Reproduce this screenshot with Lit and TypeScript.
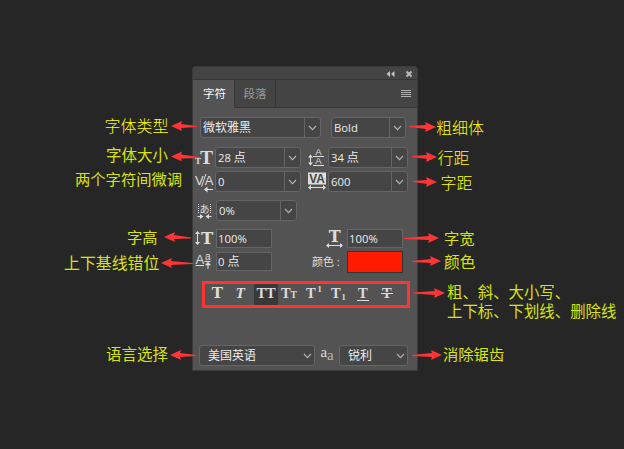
import { LitElement, html, svg, css, nothing } from "lit";
import { customElement, property } from "lit/decorators.js";

type Note = { text: string; x: number; y: number; size: number; bright?: boolean };

const notes: Note[] = [
  { text: "字体类型", x: 104.5, y: 124.5, size: 16, bright: true },
  { text: "字体大小", x: 106, y: 154.5, size: 15.5 },
  { text: "两个字符间微调", x: 75, y: 178.5, size: 15.3 },
  { text: "字高", x: 127, y: 236.5, size: 15.3 },
  { text: "上下基线错位", x: 64, y: 263, size: 15.9 },
  { text: "语言选择", x: 106, y: 353.5, size: 15.5 },
  { text: "粗细体", x: 436, y: 127, size: 16, bright: true },
  { text: "行距", x: 437.5, y: 156.500, size: 16, bright: true },
  { text: "字距", x: 440.5, y: 181.5, size: 16, bright: true },
  { text: "字宽", x: 444, y: 237.5, size: 15.3 },
  { text: "颜色", x: 444, y: 261.5, size: 15.7 },
  { text: "粗、斜、大小写、", x: 447, y: 292, size: 15.4 },
  { text: "上下标、下划线、删除线", x: 447, y: 310.5, size: 15.4 },
  { text: "消除锯齿", x: 443, y: 353.5, size: 15.3 },
];

// [tip x, tip y, tail x, tail y]
const arrows: number[][] = [
  [171, 126, 197, 126.5],
  [171, 156.5, 200, 157.5],
  [164, 237, 191, 238],
  [161, 263, 193, 263.5],
  [170, 355, 196, 355.5],
  [436, 127, 409, 126.5],
  [437, 157, 412, 156.5],
  [437, 182, 413, 181.5],
  [439, 238, 404, 238.5],
  [441, 261, 412, 261.5],
  [445, 293, 413, 293],
  [442, 355, 412, 355.5],
];

const arrowPath = ([tx, ty, ex, ey]: number[]) => {
  const d = Math.sign(ex - tx);
  const hx = tx + 10 * d;
  return `M${tx} ${ty}L${hx + d} ${ty - 5}L${hx} ${ty - 2}L${ex} ${ey - 0.5}V${ey + 0.5}L${hx} ${ty + 2}L${hx + d} ${ty + 5}Z`;
};

@customElement("panel-field")
export class PanelField extends LitElement {
  @property() value = "";
  @property() kind = "combo";

  static styles = css`
    :host { display: block; box-sizing: border-box; }
    .box {
      box-sizing: border-box; height: 100%; display: flex; align-items: center;
      background: #454545; border: 1px solid #666; color: #ececec;
      font: 11.5px/1 "Open Sans", "Noto Sans CJK SC", sans-serif;
    }
    .combo, .select { border-radius: 3px; }
    .value { flex: 1; padding-left: 1px; white-space: nowrap; font-size: 11.3px; }
    .combo .value { padding-left: 2px; }
    .han { font-size: 12px; }
    .select .value { padding-left: 8px; font-size: 12px; }
    .arrow { width: 15px; height: 100%; display: flex; align-items: center; justify-content: center; }
    .combo .arrow { border-left: 1px solid #666; }
    .select .arrow { width: 14px; }
  `;

  render() {
    const parts = this.value.split(/([\u4e00-\u9fff]+)/);
    return html`<div class="box ${this.kind}">
      <span class="value">${parts.map((p, i) => (i % 2 ? html`<span class="han">${p}</span>` : p))}</span>
      ${this.kind === "text"
        ? nothing
        : html`<span class="arrow"><svg width="9" height="6" viewBox="0 0 9 6" fill="none" stroke="#b4b4b4" stroke-width="1.1"><path d="M1 1l3.5 3.6L8 1" /></svg></span>`}
    </div>`;
  }
}

const t = (x: number, y: number, size: number, s = "T", cls = "b") =>
  svg`<text class=${cls} x=${x} y=${y} font-size=${size}>${s}</text>`;

const icon = (w: number, h: number, body: unknown) =>
  html`<svg class="icon" width=${w} height=${h} viewBox="0 0 ${w} ${h}">${body}</svg>`;

const hArrow = (x1: number, x2: number, y: number) =>
  svg`<path class="line" d="M${x1 + 1} ${y}H${x2 - 1}" /><path class="solid" d="M${x1} ${y}l3-2.500v5zM${x2} ${y}l-3-2.500v5z" />`;
const vArrow = (x: number, y1: number, y2: number) =>
  svg`<path class="line" d="M${x} ${y1 + 1}V${y2 - 1}" /><path class="solid" d="M${x} ${y1}l-2.500 3h5zM${x} ${y2}l-2.500-3h5z" />`;

const icons = {
  size: icon(20, 20, svg`${t(0, 15.5, 9)}${t(5, 15.5, 19.5)}`),
  leading: icon(18, 20, svg`${vArrow(2.5, 6.5, 17.5)}
    <path class="line" d="M5 8.5h11M5 17.5h11" />${t(7.3, 7, 9.5, "A", "s")}${t(7.3, 16, 9.5, "A", "s")}`),
  kerning: icon(20, 20, svg`${t(0, 13, 13, "V", "s")}${t(9.8, 13, 13, "A", "s")}
    <path class="line" d="M6.5 14.5L11 2M11 17.5h7" /><path class="solid" d="M9 17.500l3.500-3v6z" />`),
  tracking: icon(18, 19, svg`<rect class="solid" y="0.5" width="18" height="12" />
    <text class="dark" x="1.2" y="11" font-size="12.5" textLength="15.6" lengthAdjust="spacingAndGlyphs">VA</text>${hArrow(0, 18, 15.5)}`),
  tsume: icon(20, 18, svg`<path class="dots" d="M3.500 2v9M15.500 2v9" />
    <text class="jp" x="4.5" y="10.500" font-size="10">あ</text>
    <path class="line" d="M2.500 14.500h3M13.500 14.500h3" /><path class="solid" d="M8.500 14.500l-3.500-2.500v5zM10.500 14.500l3.500-2.500v5z" />`),
  tall: icon(20, 18, svg`${vArrow(2.5, 1, 15)}${t(6, 14, 16.5, "T", "slab")}`),
  wide: icon(18, 18, svg`${t(2.8, 12, 16, "T", "slab")}${hArrow(0, 17, 15.5)}`),
  baseline: icon(17, 17, svg`${t(0.5, 11.3, 13, "A", "s")}${t(10, 6.800, 10, "a", "s")}
    <path class="line" d="M0.500 12.500h8.500M9.500 8.500h6M13 11v5" /><path class="solid" d="M13 8.800l-3 3.500h6z" />`),
  alias: icon(14, 14, svg`${t(0.5, 8, 15, "a", "r")}${t(7, 11, 15, "a", "r dim")}`),
};

const styles: { name: string; art: unknown; on?: boolean }[] = [
  { name: "bold", art: svg`${t(5.800, 14.2, 15, "T", "slab wide")}` },
  { name: "italic", art: svg`<text class="b ital" x="5.500" y="14.2" font-size="15.500">T</text>` },
  { name: "caps", on: true, art: svg`${t(2.6, 14.2, 14.5)}${t(12, 14.2, 14.5)}` },
  { name: "small-caps", art: svg`${t(3, 14.2, 14.5)}${t(12.500, 14.2, 9.500)}` },
  { name: "super", art: svg`${t(4, 14.2, 14.5)}${t(15.500, 8, 8.5, "1")}` },
  { name: "sub", art: svg`${t(4, 14.2, 14.5)}${t(14.500, 15.500, 8.5, "1")}` },
  { name: "underline", art: svg`${t(7, 13.5, 14.5)}<path class="line" d="M6 16.500h12" />` },
  { name: "strike", art: svg`${t(7, 14.2, 14.5)}<path class="cut" d="M5 8.500h14" /><path class="line" d="M6 9.500h12" />` },
];

@customElement("character-panel")
export class CharacterPanel extends LitElement {
  static styles = css`
    :host {
      display: flex; flex-direction: column; box-sizing: border-box; width: 226px; height: 305px;
      background: #535353; border: 1px solid #3a3a3a; border-radius: 4px 4px 0 0; overflow: hidden;
      color: #ddd; font: 12px/1 "Open Sans", "Noto Sans CJK SC", sans-serif;
    }
    .title { height: 12px; flex: none; background: #444; border-bottom: 1px solid #363636; display: flex; justify-content: flex-end; align-items: center; }
    .title svg { margin: 1px 4px 0 0; }
    .tabs { height: 28px; flex: none; box-sizing: border-box; display: flex; background: #444; }
    .tab { box-sizing: border-box; width: 41px; border-right: 1px solid #363636; border-bottom: 1px solid #363636; display: flex; align-items: center; justify-content: center; color: #9b9b9b; font-size: 11.5px; }
    .tab.on { width: 42px; padding-left: 2px; background: #535353; color: #fafafa; border-bottom-color: #535353; }
    .rest { flex: 1; display: flex; justify-content: flex-end; align-items: center; padding-right: 6px; border-bottom: 1px solid #363636; }
    .row { display: grid; align-items: center; }
    .families { margin: 9px 0 0 7px; height: 21px; grid-template-columns: 121px 75px; column-gap: 10px; }
    .pair { margin: 9px 0 0 2px; height: 21px; grid-template-columns: 20px 86px 7px 20px 80px; }
    .families > panel-field, .pair > panel-field { height: 21px; }
    .pair .right { grid-column: 4; }
    .pair + .pair { margin-top: 3px; }
    .pair.single { margin-top: 8px; grid-template-columns: 21px 81px; }
    .scale { margin: 8px 0 0 2px; height: 19px; grid-template-columns: 21px 56px 54px 21px 56px; }
    .scale > panel-field { height: 19px; }
    .shift { margin: 3px 0 0 2px; height: 22px; grid-template-columns: 21px 56px 39px 36px 56px; align-items: start; }
    .shift > panel-field { height: 19px; margin-top: 1px; }
    .shift > .icon { margin-top: 2px; }
    .caption { white-space: nowrap; padding: 5px 0 0 1px; color: #ddd; font-size: 11px; }
    .swatch { box-sizing: border-box; height: 22px; background: #ff1a00; border: 1px solid #333; }
    .styles { box-sizing: border-box; margin: 8px 0 0 9px; width: 208px; height: 27px; flex: none; border: 3px solid #ff3535; padding-left: 1px; display: flex; align-items: center; }
    .style { width: 24.1px; height: 21px; flex: none; display: flex; justify-content: center; }
    .style.on { background: #383838; border-radius: 2px; }
    .footer { margin: 37px 0 0 6px; height: 21px; grid-template-columns: 116px 24px 69px; }
    .footer > panel-field { height: 21px; }
    .footer .icon { justify-self: center; }
    .icon, .style svg { display: block; overflow: visible; }
    text { fill: #ddd; }
    .b { font-family: "Liberation Serif", serif; font-weight: 700; }
    .slab { font-family: "DejaVu Serif", serif; font-weight: 700; }
    .r { font-family: "Liberation Serif", serif; }
    .ital { font-style: italic; }
    .dim { fill: #b5b5b5; }
    .s { font-family: "Liberation Sans", sans-serif; }
    .dark { fill: #444; font-family: "Liberation Sans", sans-serif; font-weight: 700; }
    .jp { font-family: "Noto Sans CJK JP", sans-serif; }
    .line { stroke: #ddd; fill: none; }
    .cut { stroke: #535353; }
    .solid { fill: #ddd; }
    .dots { stroke: #ddd; stroke-dasharray: 1 1; }
  `;

  render() {
    return html`
      <div class="title">
        <svg width="27" height="8" viewBox="0 0 27 8">
          <path d="M4 1v6L.5 4zM8.500 1v6L5 4z" fill="#c4c4c4" />
          <path d="M20.500 1.500l5 5M25.500 1.500l-5 5" stroke="#b8b8b8" stroke-width="2" />
        </svg>
      </div>
      <div class="tabs">
        <div class="tab on">字符</div>
        <div class="tab">段落</div>
        <div class="rest"><svg width="10" height="8" viewBox="0 0 10 8"><path d="M0 .5h10M0 2.500h10M0 4.500h10M0 6.500h10" stroke="#b0b0b0" /></svg></div>
      </div>
      <div class="row families">
        <panel-field value="微软雅黑"></panel-field>
        <panel-field value="Bold"></panel-field>
      </div>
      <div class="row pair">
        ${icons.size}<panel-field value="28 点"></panel-field>
        <span class="right">${icons.leading}</span><panel-field value="34 点"></panel-field>
      </div>
      <div class="row pair">
        ${icons.kerning}<panel-field value="0"></panel-field>
        <span class="right">${icons.tracking}</span><panel-field value="600"></panel-field>
      </div>
      <div class="row pair single">
        ${icons.tsume}<panel-field value="0%"></panel-field>
      </div>
      <div class="row scale">
        ${icons.tall}<panel-field kind="text" value="100%"></panel-field><span></span>
        ${icons.wide}<panel-field kind="text" value="100%"></panel-field>
      </div>
      <div class="row shift">
        ${icons.baseline}<panel-field kind="text" value="0 点"></panel-field><span></span>
        <span class="caption">颜色 :</span><div class="swatch"></div>
      </div>
      <div class="styles">
        ${styles.map((s) => html`<div class="style ${s.on ? "on" : ""}"><svg width="24" height="21" viewBox="0 0 24 21" aria-label=${s.name}>${s.art}</svg></div>`)}
      </div>
      <div class="row footer">
        <panel-field kind="select" value="美国英语"></panel-field>
        ${icons.alias}
        <panel-field kind="select" value="锐利"></panel-field>
      </div>
    `;
  }
}

@customElement("app-root")
export class AppRoot extends LitElement {
  static styles = css`
    :host { display: block; position: relative; box-sizing: border-box; width: 624px; height: 449px; padding: 66px 0 0 192px; background: #262626; overflow: hidden; }
    .arrows { position: absolute; inset: 0; fill: #ff3535; }
    .note { position: absolute; transform: translateY(-50%); white-space: nowrap; line-height: 1; color: #dbe30c; font-family: "Noto Sans CJK SC", sans-serif; }
    .bright { color: #ffff00; font-weight: 300; }
  `;

  render() {
    return html`
      <character-panel></character-panel>
      <svg class="arrows" width="624" height="449" viewBox="0 0 624 449">${arrows.map((a) => svg`<path d=${arrowPath(a)} />`)}</svg>
      ${notes.map((n) => html`<span class="note ${n.bright ? "bright" : ""}" style="left:${n.x}px;top:${n.y}px;font-size:${n.size}px">${n.text}</span>`)}
    `;
  }
}
